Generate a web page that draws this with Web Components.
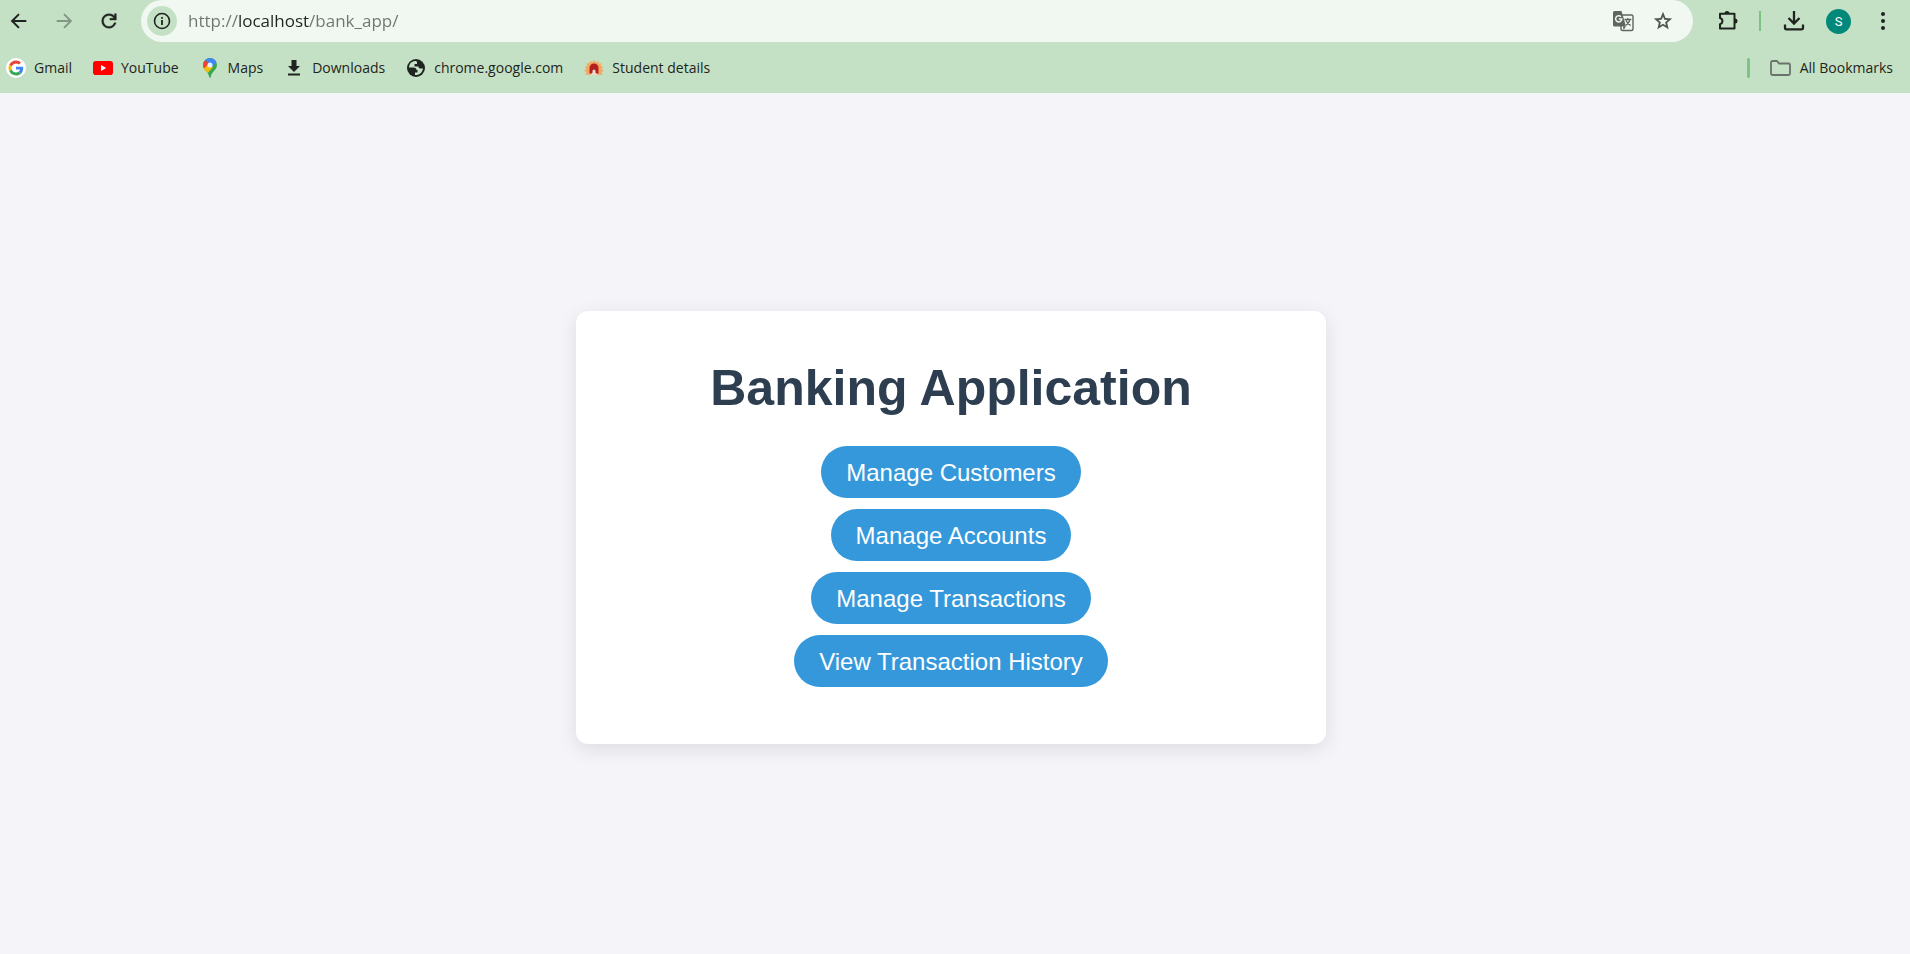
<!DOCTYPE html>
<html lang="en">
<head>
<meta charset="utf-8">
<title>Banking Application</title>
<style>
  html, body { margin: 0; height: 100%; }
  body { background: #f4f4f9; font-family: "Liberation Sans", Arial, sans-serif; }
</style>
</head>
<body>
<browser-window>
  <tool-bar slot="chrome"></tool-bar>
  <bookmark-bar slot="chrome">
    <book-mark icon="google">Gmail</book-mark>
    <book-mark icon="youtube">YouTube</book-mark>
    <book-mark icon="maps">Maps</book-mark>
    <book-mark icon="save">Downloads</book-mark>
    <book-mark icon="globe">chrome.google.com</book-mark>
    <book-mark icon="sun">Student details</book-mark>
    <book-mark slot="end" icon="folder">All Bookmarks</book-mark>
  </bookmark-bar>
  <bank-card>
    <span slot="title">Banking Application</span>
    <pill-link href="#customers">Manage Customers</pill-link>
    <pill-link href="#accounts">Manage Accounts</pill-link>
    <pill-link href="#transactions">Manage Transactions</pill-link>
    <pill-link href="#history">View Transaction History</pill-link>
  </bank-card>
</browser-window>

<script>
const ICONS = {
  back: '<svg viewBox="0 0 24 24" width="22" height="22" fill="none" stroke="#1f2420" stroke-width="2.200"><path d="M20 12H5M12 4.500 4.500 12l7.500 7.500"/></svg>',
  forward: '<svg viewBox="0 0 24 24" width="22" height="22" fill="none" stroke="#849786" stroke-width="2.200"><path d="M4 12h15M12 4.500l7.500 7.500-7.500 7.500"/></svg>',
  reload: '<svg viewBox="0 0 24 24" width="22" height="22"><path fill="#1f2420" stroke="#1f2420" stroke-width=".4" d="M12 20q-3.350 0-5.675-2.325T4 12q0-3.350 2.325-5.675T12 4q1.725 0 3.300.712T18 6.750V4h2v7h-7V9h4.200q-.8-1.400-2.187-2.200T12 6Q9.500 6 7.750 7.750T6 12q0 2.500 1.750 4.250T12 18q1.925 0 3.475-1.100T17.650 14h2.100q-.7 2.650-2.850 4.325T12 20"/></svg>',
  info: '<svg viewBox="0 0 18 18" width="18" height="18"><circle cx="9" cy="9" r="7.500" fill="none" stroke="#1f2420" stroke-width="1.600"/><path fill="#1f2420" d="M8.100 8h1.800v5H8.100zM8.100 5h1.800v1.800H8.100z"/></svg>',
  translate: '<svg viewBox="0 0 22 22" width="22" height="22"><rect x="9" y="5" width="12" height="15.500" rx="1.500" fill="none" stroke="#5f6661" stroke-width="1.400"/><path d="M2.500 1h7L14 16.500H2.500A1.500 1.500 0 0 1 1 15V2.500A1.500 1.500 0 0 1 2.500 1z" fill="#5f6661"/><path d="M11 16.500h3l-2.500 3.500z" fill="#5f6661"/><path d="M9 6.700A3.100 3.100 0 1 0 9.800 9H6.800" fill="none" stroke="#f1f8f1" stroke-width="1.500"/><path d="M12.500 9.500h6.800M15.800 8v1.500M18 9.500c-.6 2.500-2 4.300-4 5.700M14 10.500c.8 2 2.400 3.700 4.700 5" fill="none" stroke="#5f6661" stroke-width="1.300"/></svg>',
  star: '<svg viewBox="0 0 24 24" width="22" height="22"><path fill="#505752" d="m8.850 16.825 3.150-1.900 3.150 1.925-.825-3.600 2.775-2.400-3.650-.325-1.450-3.400-1.450 3.375-3.650.325 2.775 2.425zM5.825 21l1.625-7.025L2 9.250l7.200-.625L12 2l2.800 6.625 7.200.625-5.450 4.725L18.175 21 12 17.275z"/></svg>',
  puzzle: '<svg viewBox="0 0 22 22" width="22" height="22"><path d="M3 3.800h14.500v14.700H3v-4.300a3.200 3.200 0 0 0 0-6.200z" fill="none" stroke="#1f2420" stroke-width="2" stroke-linejoin="round"/><path d="M7.500 3.500a2.500 2.500 0 0 1 5 0zM18 8.500a2.500 2.500 0 0 1 0 5z" fill="#1f2420"/></svg>',
  download: '<svg viewBox="0 0 22 22" width="22" height="22" fill="none" stroke="#1f2420" stroke-width="2.300"><path d="M11 1v12M5.500 8l5.500 5.500L16.500 8M2 14.500v3.300a1.500 1.500 0 0 0 1.500 1.500h15a1.500 1.500 0 0 0 1.500-1.500v-3.300"/></svg>',
  dots: '<svg viewBox="0 0 22 22" width="22" height="22" fill="#1f2420"><circle cx="11" cy="4" r="2"/><circle cx="11" cy="11" r="2"/><circle cx="11" cy="18" r="2"/></svg>',
  google: '<svg viewBox="0 0 20 20" width="20" height="20"><circle cx="10" cy="10" r="10" fill="#fff"/><g transform="translate(2.500 2.500) scale(.3125)"><path fill="#EA4335" d="M24 9.500c3.540 0 6.710 1.220 9.210 3.600l6.850-6.850C35.900 2.380 30.470 0 24 0 14.620 0 6.510 5.380 2.560 13.220l7.980 6.190C12.430 13.720 17.740 9.500 24 9.500z"/><path fill="#4285F4" d="M46.980 24.550c0-1.570-.15-3.090-.38-4.550H24v9.020h12.940c-.58 2.960-2.260 5.480-4.780 7.180l7.730 6c4.510-4.180 7.090-10.360 7.090-17.650z"/><path fill="#FBBC05" d="M10.530 28.590c-.48-1.450-.76-2.990-.76-4.590s.27-3.140.76-4.590l-7.980-6.190C.92 16.460 0 20.120 0 24c0 3.880.92 7.540 2.560 10.780l7.970-6.190z"/><path fill="#34A853" d="M24 48c6.480 0 11.930-2.130 15.890-5.810l-7.730-6c-2.150 1.450-4.920 2.300-8.160 2.300-6.260 0-11.570-4.220-13.470-9.910l-7.980 6.190C6.510 42.620 14.620 48 24 48z"/></g></svg>',
  youtube: '<svg viewBox="0 0 20 20" width="20" height="20"><rect y="3" width="20" height="14" rx="2.800" fill="#f00"/><path d="M8 7l5.200 3L8 13z" fill="#fff"/></svg>',
  maps: '<svg viewBox="0 0 20 20" width="20" height="20"><defs><clipPath id="pin"><path d="M10 0a7 7 0 0 1 7 7c0 5-5.500 6.500-6.300 12.200q-.7 1.300-1.400 0C8.500 13.500 3 12 3 7a7 7 0 0 1 7-7z"/></clipPath></defs><g clip-path="url(#pin)"><path fill="#34a853" d="M0 0h20v20H0z"/><path fill="#fbbc04" d="M0 9l6-5 7 5-8 9z"/><path fill="#4285f4" d="M5 1.500L8 0h9v4l-5 5z"/><path fill="#ea4335" d="M5 2l4 3.500-6 6L2 5z"/></g><circle cx="10" cy="7" r="2.500" fill="#e8f0fe"/></svg>',
  save: '<svg viewBox="0 0 20 20" width="20" height="20" fill="#1f2420"><path d="M7.500 2h5v6H16l-6 6-6-6h3.500zM4 15.500h12V17.500H4z"/></svg>',
  globe: '<svg viewBox="0 0 20 20" width="20" height="20"><circle cx="10" cy="10" r="9" fill="#1f2420"/><path d="M9 3c-3.500.3-6 3.200-6 6.500h4.500c1.800 0 3 1 3 2.500h1v2.500H9V17c4 .5 7.500-2.500 8-6.500h-2.500c-1.500 0-2-.8-2-2H8.500V6H11V4.200c0-.8-.8-1.200-2-1.200z" fill="#c5e1c5"/></svg>',
  sun: '<svg viewBox="0 0 20 20" width="20" height="20"><path d="M10 2l1.500 2.300L14 3l.6 2.600 2.900-.3-.8 2.700 2.700.8-1.900 2.100L20 12.700l-2.600 1.200 1.300 2.800H1.300l1.300-2.800L0 12.700l2.500-1.800L.6 8.800 3.300 8l-.8-2.700 2.900.3L6 3l2.500 1.300z" fill="#f2a860"/><path d="M5.500 15.500V10a4.500 4.500 0 0 1 9 0v5.500z" fill="#b3201f"/><path d="M6.500 17l2-2.500v-1.500a1.500 1.500 0 0 1 3 0v1.500l2 2.500z" fill="#e8dcd4"/></svg>',
  folder: '<svg viewBox="0 0 24 20" width="24" height="20"><path d="M3 4.500A1.500 1.500 0 0 1 4.500 3H9l2 2.500h9.500A1.500 1.500 0 0 1 22 7v8.500a1.500 1.500 0 0 1-1.500 1.500h-16A1.500 1.500 0 0 1 3 15.500z" fill="none" stroke="#6a736b" stroke-width="1.800"/></svg>'
};

class BaseElement extends HTMLElement {
  connectedCallback() {
    if (this.shadowRoot) return;
    this.attachShadow({ mode: "open" }).innerHTML = this.render();
  }
}

customElements.define("browser-window", class extends BaseElement {
  render() {
    return `<style>
      :host { display: flex; flex-direction: column; min-height: 100vh; }
      header { background: #c5e1c5; color: #1f2420; font-family: "Open Sans", "Segoe UI", sans-serif; }
      main { flex: 1; display: flex; align-items: center; justify-content: center; padding: 8px 8px 0 0; }
    </style>
    <header><slot name="chrome"></slot></header>
    <main><slot></slot></main>`;
  }
});

customElements.define("icon-button", class extends BaseElement {
  render() {
    return `<style>
      :host { display: block; flex: none; }
      button { display: grid; place-items: center; width: 30px; height: 30px; padding: 0; border: 0;
        border-radius: 50%; background: var(--fill, none); }
      svg { display: block; }
    </style>
    <button type="button" aria-label="${this.getAttribute("label")}">${ICONS[this.getAttribute("icon")]}</button>`;
  }
});

customElements.define("tool-bar", class extends BaseElement {
  render() {
    return `<style>
      :host { display: flex; align-items: center; height: 42px; padding: 0 12px 0 4px; }
      nav { display: flex; gap: 15px; padding-right: 17px; }
      form { flex: 1; display: flex; align-items: center; height: 42px; margin: 0; padding: 0 15px 0 6px;
        box-sizing: border-box; border-radius: 21px; background: #f1f8f1; }
      .site { --fill: #c5e1c5; }
      input { flex: 1; min-width: 0; height: 30px; margin: 0 10px 0 11px; padding: 0; border: 0; outline: 0;
        font: 17px/30px "Open Sans", "Segoe UI", sans-serif; color: #1f2420;
        background: linear-gradient(90deg, #6d756f 50px, #1f2420 50px 121px, #6d756f 121px);
        -webkit-background-clip: text; background-clip: text; -webkit-text-fill-color: transparent; }
      .actions { display: flex; gap: 10px; }
      .tools { display: flex; align-items: center; padding-left: 20px; }
      .rule { width: 2px; height: 20px; margin: 0 18px 0 16px; background: #7dc383; }
      .avatar { width: 25px; height: 25px; margin: 0 17px; padding: 0; border: 0; border-radius: 50%;
        background: #00897b; color: #fff; font: 13px/25px Roboto, sans-serif; }
    </style>
    <nav aria-label="History">
      <icon-button icon="back" label="Back"></icon-button>
      <icon-button icon="forward" label="Forward"></icon-button>
      <icon-button icon="reload" label="Reload"></icon-button>
    </nav>
    <form>
      <icon-button class="site" icon="info" label="View site information"></icon-button>
      <input type="text" aria-label="Address" value="http://localhost/bank_app/" spellcheck="false">
      <div class="actions">
        <icon-button icon="translate" label="Translate this page"></icon-button>
        <icon-button icon="star" label="Bookmark this tab"></icon-button>
      </div>
    </form>
    <div class="tools">
      <icon-button icon="puzzle" label="Extensions"></icon-button>
      <span class="rule"></span>
      <icon-button icon="download" label="Downloads"></icon-button>
      <button class="avatar" type="button">S</button>
      <icon-button icon="dots" label="Menu"></icon-button>
    </div>`;
  }
});

customElements.define("bookmark-bar", class extends BaseElement {
  render() {
    return `<style>
      :host { display: flex; align-items: center; justify-content: space-between; height: 51px; padding: 0 17px 0 6px; }
      nav { display: flex; gap: 21px; }
      .end { display: flex; align-items: center; gap: 18px; }
      .rule { width: 3px; height: 20px; border-radius: 2px; background: #7dc383; }
    </style>
    <nav aria-label="Bookmarks"><slot></slot></nav>
    <div class="end"><span class="rule"></span><slot name="end"></slot></div>`;
  }
});

customElements.define("book-mark", class extends BaseElement {
  render() {
    return `<style>
      :host { display: block; }
      a { display: flex; align-items: center; gap: 8px; color: inherit; font-size: 14px; line-height: 20px;
        white-space: nowrap; text-decoration: none; }
      svg { display: block; flex: none; }
    </style>
    <a href="#">${ICONS[this.getAttribute("icon")]}<span><slot></slot></span></a>`;
  }
});

customElements.define("bank-card", class extends BaseElement {
  render() {
    return `<style>
      :host { display: block; box-sizing: border-box; width: 100%; max-width: 750px; padding: 49px 50px 57px;
        border-radius: 12px; background: #fff; box-shadow: 0 5px 19px rgba(0, 0, 0, .1); text-align: center; }
      h1 { margin: 0 0 30px; color: #2c3e50; font-size: 50px; line-height: 56px; font-weight: bold; }
      nav { display: flex; flex-direction: column; align-items: center; gap: 11px; }
    </style>
    <h1><slot name="title"></slot></h1>
    <nav aria-label="Sections"><slot></slot></nav>`;
  }
});

customElements.define("pill-link", class extends BaseElement {
  render() {
    return `<style>
      :host { display: block; }
      a { display: block; padding: 13px 25px 11px; border-radius: 26px; background: #3498db; color: #fff;
        font-size: 24px; line-height: 28px; text-decoration: none; }
    </style>
    <a href="${this.getAttribute("href")}"><slot></slot></a>`;
  }
});
</script>
</body>
</html>
